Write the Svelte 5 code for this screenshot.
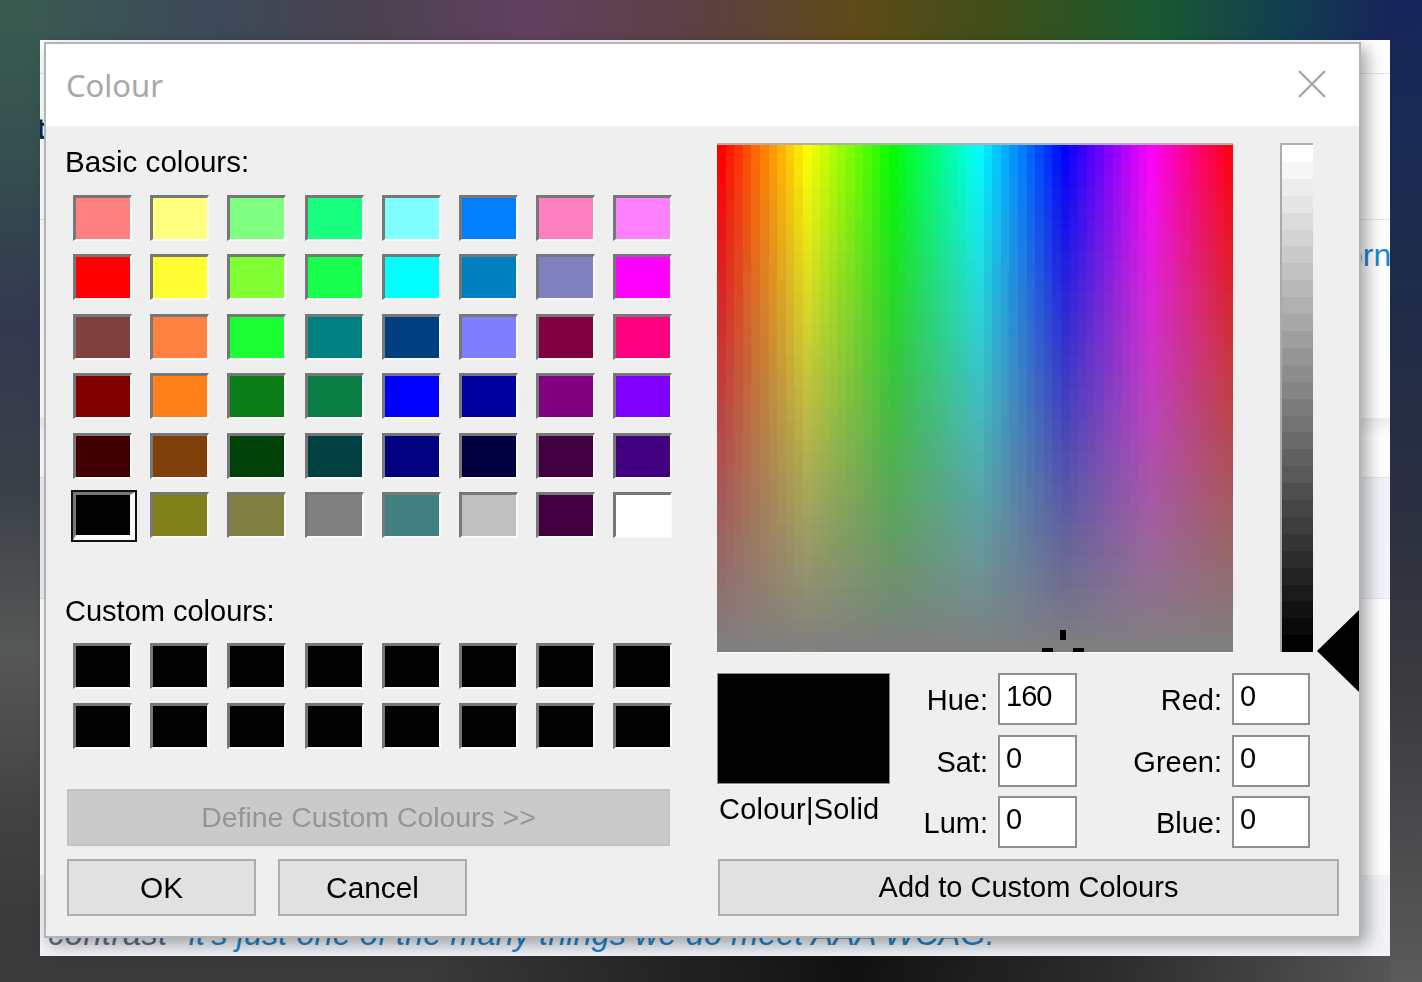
<script>
  const basic = [
    '#ff8080', '#ffff80', '#80ff80', '#19ff80', '#80ffff', '#0080ff', '#ff80c0', '#ff80ff',
    '#ff0000', '#ffff33', '#80ff33', '#19ff4d', '#00ffff', '#0080c0', '#8080c0', '#ff00ff',
    '#804040', '#ff8040', '#19ff33', '#008080', '#004080', '#8080ff', '#800040', '#ff0080',
    '#800000', '#ff8019', '#0a7d19', '#0a7d45', '#0000ff', '#0000a0', '#800080', '#8000ff',
    '#400000', '#804009', '#004009', '#004040', '#000080', '#000040', '#400040', '#400080',
    '#000000', '#808019', '#808040', '#808080', '#408080', '#c0c0c0', '#400040', '#ffffff'
  ]
  const custom = new Array(16).fill('#000000')

  const cols = 60
  const rows = 48
  const cells = []
  for (let r = 0; r < rows; r++) {
    for (let c = 0; c < cols; c++) {
      // the reference's hue scale starts a few pixels in from the left edge
      const hue = Math.max(0, ((c + 0.5) * 8.6 - 4) / 1.429)
      const sat = 100 - (r + 0.5) * 100 / rows
      cells.push({ x: c, y: r, fill: `hsl(${hue} ${sat}% 50%)` })
    }
  }

  const steps = []
  for (let i = 0; i < 30; i++) {
    const v = Math.round(255 - i * 255 / 29)
    steps.push(`rgb(${v},${v},${v})`)
  }

  const fieldsLeft = [['Hue:', '160'], ['Sat:', '0'], ['Lum:', '0']]
  const fieldsRight = [['Red:', '0'], ['Green:', '0'], ['Blue:', '0']]
</script>

<div class="desktop">
  <div class="page">
    <div class="rule r1"></div>
    <div class="rule r2"></div>
    <div class="band b1"></div>
    <div class="band b2"></div>
    <div class="band b3"></div>
    <span class="stray-t">t</span>
    <span class="stray-orn">orn</span>
    <p class="behind"><span class="grey">contrast - </span>it's just one of the many things we do meet AAA WCAG.</p>
  </div>

  <div class="dialog">
    <div class="titlebar">
      <span class="title">Colour</span>
      <svg class="close" width="28" height="28" viewBox="0 0 28 28">
        <path d="M1 1 L27 27 M27 1 L1 27" stroke="#a3a3a3" stroke-width="2.2" fill="none" />
      </svg>
    </div>

    <div class="body">
      <div class="left">
        <div class="label basic-label">Basic colours:</div>
        <div class="swatches">
          {#each basic as color, i}
            <div class="swatch" class:selected={i === 40} style="background-color: {color}"></div>
          {/each}
        </div>
        <div class="label custom-label">Custom colours:</div>
        <div class="swatches">
          {#each custom as color}
            <div class="swatch" style="background-color: {color}"></div>
          {/each}
        </div>
        <button class="btn define" disabled>Define Custom Colours &gt;&gt;</button>
        <div class="actions">
          <button class="btn small">OK</button>
          <button class="btn small">Cancel</button>
        </div>
      </div>

      <div class="right">
        <div class="pickers">
          <div class="spectrum">
            <svg width="516" height="507" viewBox="0 0 {cols} {rows}" preserveAspectRatio="none" shape-rendering="crispEdges">
              {#each cells as cell}
                <rect x={cell.x} y={cell.y} width="1.02" height="1.02" fill={cell.fill} />
              {/each}
            </svg>
            <i class="tick up"></i>
            <i class="tick lft"></i>
            <i class="tick rgt"></i>
          </div>
          <div class="lum">
            {#each steps as step}
              <div style="background-color: {step}"></div>
            {/each}
          </div>
          <svg class="arrow" width="42" height="82" viewBox="0 0 42 82">
            <path d="M0 41 L42 0 L42 82 Z" fill="#000" />
          </svg>
        </div>

        <div class="values">
          <div class="preview-col">
            <div class="preview"></div>
            <div class="label preview-label">Colour|Solid</div>
          </div>
          {#each fieldsLeft as f, i}
            <label class="label fl" style="grid-row: {i + 1}" for="l{i}">{f[0]}</label>
            <input id="l{i}" class="field fi" style="grid-row: {i + 1}" value={f[1]} />
            <label class="label fl2" style="grid-row: {i + 1}" for="r{i}">{fieldsRight[i][0]}</label>
            <input id="r{i}" class="field fi2" style="grid-row: {i + 1}" value={fieldsRight[i][1]} />
          {/each}
        </div>

        <button class="btn add">Add to Custom Colours</button>
      </div>
    </div>
  </div>
</div>

<style>
:global(body) {
  margin: 0;
}
* {
  box-sizing: border-box;
}
.desktop {
  position: relative;
  width: 1422px;
  height: 982px;
  overflow: hidden;
  background-color: #333;
  background-repeat: no-repeat;
  background-image:
    linear-gradient(to bottom, #3a5c50 0, #35504f 150px, #33384f 326px, #3a4048 480px, #565856 650px, #444 800px, #3a3a3a 922px),
    linear-gradient(to bottom, #16245a 0, #1b2a52 150px, #1e2b48 300px, #2c3040 520px, #3a3a3e 680px, #5a5a5a 982px),
    linear-gradient(to right, #3a5c50 0%, #3c4a58 14%, #4a4250 26%, #624060 37%, #5c4040 50%, #5f4a18 60%, #3f4f18 70%, #1a5a30 81%, #124050 90%, #16245a 97.7%),
    linear-gradient(to right, #3a3a3a 0%, #3a3a3a 30%, #111 60%, #2c2c2c 78%, #5a5a5a 100%);
  background-size: 40px 100%, 32px 100%, 100% 40px, 100% 30px;
  background-position: left top, right top, left top, left bottom;
}
.page {
  position: absolute;
  left: 40px;
  top: 40px;
  width: 1350px;
  height: 916px;
  background: #fff;
  overflow: hidden;
}
.rule {
  position: absolute;
  left: 0;
  right: 0;
  height: 1px;
  background: #dfe5ef;
}
.r1 { top: 33px; }
.r2 { top: 179px; }
.band {
  position: absolute;
  left: 0;
  right: 0;
}
.b1 {
  top: 378px;
  height: 59px;
  background: linear-gradient(to bottom, #ececec, #fff 30%);
}
.b2 {
  top: 437px;
  height: 122px;
  background: #f1f3f8;
  border-top: 1px solid #dfe5ef;
  border-bottom: 1px solid #dfe5ef;
}
.b3 {
  top: 835px;
  height: 81px;
  background: #f1f3f8;
}
.stray-t {
  position: absolute;
  left: -4px;
  top: 72px;
  font: bold 30px "Liberation Sans", sans-serif;
  color: #12263f;
}
.stray-orn {
  position: absolute;
  left: 1305px;
  top: 197px;
  font: 32px "Liberation Sans", sans-serif;
  color: #1b87d2;
}
.behind {
  position: absolute;
  left: 8px;
  top: 875px;
  margin: 0;
  font: italic 32.6px "Liberation Sans", sans-serif;
  color: #1b87d2;
  white-space: nowrap;
}
.grey {
  color: #5d6f86;
  letter-spacing: 0.5px;
}
.dialog {
  position: absolute;
  left: 44px;
  top: 42px;
  width: 1317px;
  height: 896px;
  background: #efefef;
  border: 2px solid #b4b4b4;
  box-shadow: 6px 6px 16px rgba(0,0,0,0.35);
  font-family: "Liberation Sans", sans-serif;
  filter: blur(0.7px);
}
.titlebar {
  position: relative;
  height: 82px;
  background: #fff;
  display: flex;
  align-items: center;
  padding-left: 20px;
}
.title {
  font: 31px "Noto Sans", sans-serif;
  color: #a8a8a8;
}
.close {
  position: absolute;
  right: 33px;
  top: 26px;
}
.body {
  display: flex;
}
.left {
  width: 671px;
  padding-left: 19px;
}
.label {
  font-size: 29px;
  line-height: 34px;
  color: #000;
}
.basic-label {
  margin-top: 19px;
  font-size: 29.6px;
}
.custom-label {
  margin-top: 55.5px;
}
.swatches {
  margin: 15.5px 0 0 8px;
  display: grid;
  grid-template-columns: repeat(8, 59px);
  column-gap: 18.2px;
  grid-auto-rows: 46px;
  row-gap: 13.5px;
}
.swatch {
  border-style: solid;
  border-width: 3px 2px 2px 3px;
  border-color: #777 #fafafa #fafafa #777;
}
.swatch.selected {
  outline: 2px solid #111;
  margin: 0 -3px -2px 0;
  border-width: 3px 5px 5px 3px;
}
.btn {
  font-family: "Liberation Sans", sans-serif;
  font-size: 29px;
  height: 57px;
  padding: 0;
  background: #e1e1e1;
  border: 2px solid #adadad;
  color: #000;
  display: block;
}
.define {
  width: 603px;
  margin: 40.5px 0 0 2px;
  background: #cacaca;
  border-color: #c2c2c2;
  color: #959595;
  font-size: 28.4px;
}
.actions {
  display: flex;
  gap: 22px;
  margin: 13px 0 0 2px;
}
.small {
  width: 189px;
  font-size: 29.8px;
}
.right {
  padding-top: 19px;
}
.pickers {
  position: relative;
  display: flex;
  align-items: flex-start;
  gap: 47px;
}
.spectrum {
  position: relative;
  width: 516px;
  height: 507px;
  box-shadow: 0 -2px 0 #b0b0b0, 0 1px 0 #fafafa;
}
.spectrum svg {
  display: block;
}
.tick {
  position: absolute;
  background: #000;
}
.up { left: 343px; top: 485px; width: 6px; height: 10px; }
.lft { left: 325px; top: 503px; width: 11px; height: 4px; }
.rgt { left: 356px; top: 503px; width: 11px; height: 4px; }
.lum {
  width: 33px;
  height: 507px;
  display: flex;
  flex-direction: column;
  border-left: 2px solid #aaa;
  box-shadow: 0 -2px 0 #b0b0b0;
}
.lum div {
  flex: 1;
}
.arrow {
  position: absolute;
  left: 600px;
  top: 465px;
}
.values {
  margin-top: 21px;
  display: grid;
  grid-template-columns: 173px 108px 79px 155px 78px;
  grid-template-rows: repeat(3, 52px);
  row-gap: 9.5px;
}
.preview-col {
  grid-column: 1;
  grid-row: 1 / 4;
}
.preview {
  height: 111px;
  background: #000;
  border: 1px solid #888;
  box-shadow: 0 1px 0 #fafafa;
}
.preview-label {
  margin: 8px 0 0 2px;
  letter-spacing: 0.25px;
}
.fl, .fl2 {
  text-align: right;
  padding-right: 10px;
  align-self: center;
  padding-top: 2px;
}
.fl { grid-column: 2; }
.fi { grid-column: 3; }
.fl2 { grid-column: 4; }
.fi2 { grid-column: 5; }
.field {
  width: 100%;
  height: 52px;
  border: 2px solid #8f8f8f;
  background: #fff;
  font-family: "Liberation Sans", sans-serif;
  font-size: 29px;
  letter-spacing: -1px;
  color: #000;
  padding: 0 0 5px 6px;
  border-radius: 0;
  outline: none;
}
.add {
  width: 621px;
  margin: 11px 0 0 1px;
}
</style>
